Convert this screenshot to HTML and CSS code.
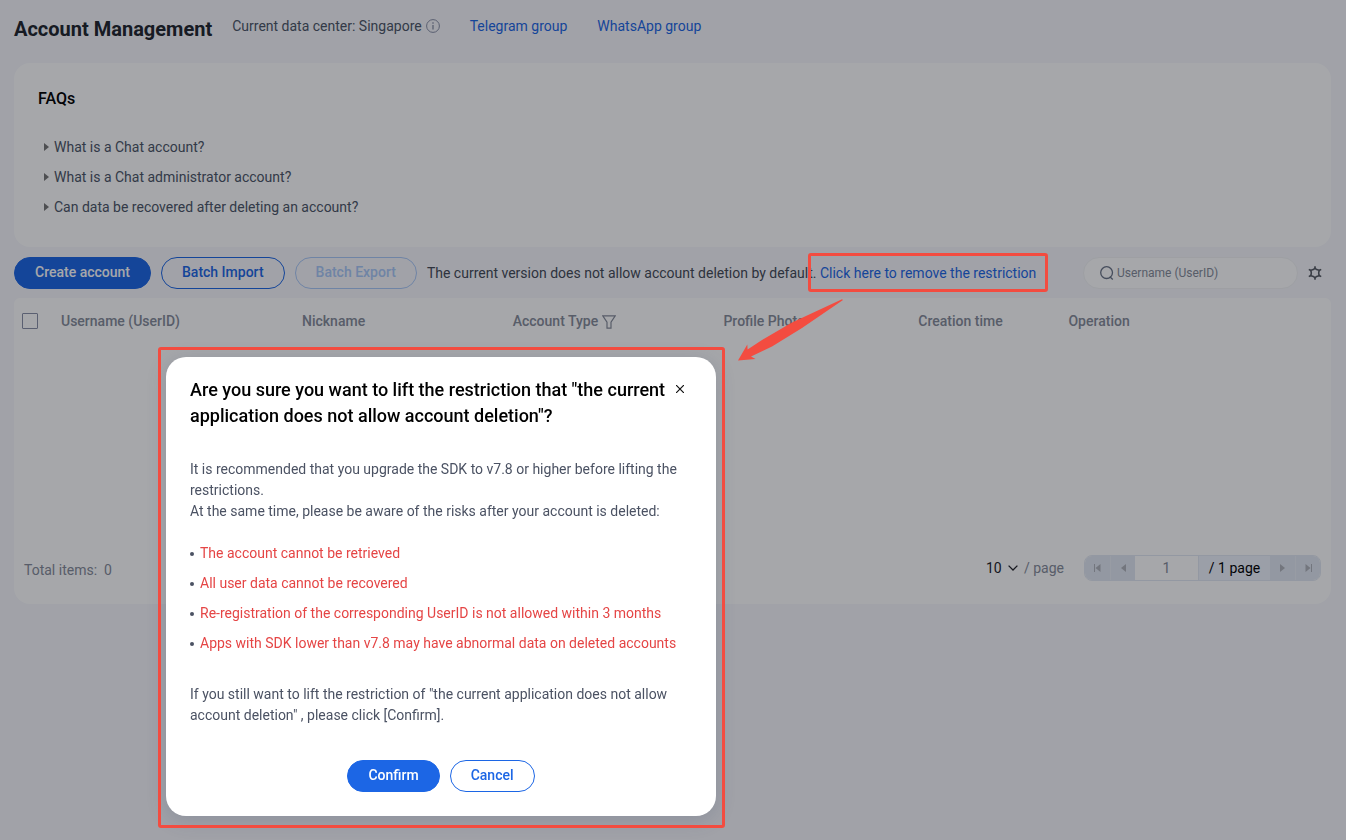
FILE: index.html
```html
<!DOCTYPE html>
<html lang="en">
<head>
    <meta charset="UTF-8">
    <meta name="viewport" content="width=device-width, initial-scale=1.0">
    <title>Account Management</title>
    <link rel="stylesheet" href="styles.css">
</head>
<body>

<div class="page">
    <header class="header">
        <h1 class="title">Account Management</h1>
        <span class="center">Current data center: Singapore
            <svg class="info" width="14" height="14" viewBox="0 0 14 14" fill="none" stroke="currentColor"><circle cx="7" cy="7" r="6.4"/><path d="M7 6v4.5M7 3.3v1.4" stroke-width="1.3"/></svg>
        </span>
        <a class="link" href="#">Telegram group</a>
        <a class="link" href="#">WhatsApp group</a>
    </header>

    <section class="faqs">
        <h2 class="faqs-title">FAQs</h2>
        <details class="faq"><summary>What is a Chat account?</summary></details>
        <details class="faq"><summary>What is a Chat administrator account?</summary></details>
        <details class="faq"><summary>Can data be recovered after deleting an account?</summary></details>
    </section>

    <div class="toolbar">
        <button class="button primary">Create account</button>
        <button class="button">Batch Import</button>
        <button class="button" disabled>Batch Export</button>
        <p class="notice">The current version does not allow account deletion by default. <a class="link" href="#">Click here to remove the restriction</a></p>
        <label class="search">
            <svg width="14" height="14" viewBox="0 0 14 14" fill="none" stroke="currentColor" stroke-width="1.3"><circle cx="6.6" cy="6.6" r="5.9"/><path d="M9.8 10.8l3 2.6"/></svg>
            <input type="text" placeholder="Username (UserID)" aria-label="Username (UserID)">
        </label>
        <button class="settings" aria-label="Settings">
            <svg width="14" height="14" viewBox="0 0 14 14" fill="none" stroke="currentColor" stroke-width="1.6"><path d="M7 .2v2.3M7 11.5v2.3M.8 3.4l2.4 1.4M10.8 9.2l2.4 1.4M.8 10.6l2.4-1.4M10.8 4.8l2.4-1.4"/><path d="M7 2.3l1.7 1.3 2.4.7-.4 2.7.4 2.7-2.4.7L7 11.7l-1.7-1.3-2.4-.7.4-2.7-.4-2.7 2.4-.7z"/></svg>
        </button>
    </div>

    <section class="accounts">
        <table class="table">
            <thead>
                <tr>
                    <th class="col-check"><input type="checkbox" class="check" aria-label="Select all"></th>
                    <th class="col-user">Username (UserID)</th>
                    <th class="col-mid">Nickname</th>
                    <th class="col-mid">Account Type
                        <svg class="filter" width="14" height="14" viewBox="0 0 14 14" fill="none" stroke="currentColor" stroke-width="1.2"><path d="M.8.8h12.4L9 7.2v6H5v-6z"/></svg>
                    </th>
                    <th class="col-photo">Profile Photo</th>
                    <th class="col-time">Creation time</th>
                    <th>Operation</th>
                </tr>
            </thead>
        </table>
        <footer class="footer">
            <span class="total">Total items:&nbsp; 0</span>
            <div class="paging">
                <label class="size">
                    <select class="size-select" aria-label="Items per page"><option>10</option></select>
                    <svg width="10" height="6" viewBox="0 0 10 6" fill="none" stroke="#212228" stroke-width="1.3"><path d="M.6.6L5 5 9.4.6"/></svg>
                    <span>/ page</span>
                </label>
                <nav class="pager">
                    <button class="step" aria-label="First page"><svg width="7" height="8" viewBox="0 0 7 8"><path d="M0 0h1v8H0zM6.5 0v8L1.5 4z"/></svg></button>
                    <button class="step" aria-label="Previous page"><svg width="5" height="8" viewBox="0 0 5 8"><path d="M5 0v8L0 4z"/></svg></button>
                    <input class="current" type="text" value="1" aria-label="Page">
                    <span class="pages">/ 1 page</span>
                    <button class="step" aria-label="Next page"><svg width="5" height="8" viewBox="0 0 5 8"><path d="M0 0v8l5-4z"/></svg></button>
                    <button class="step" aria-label="Last page"><svg width="7" height="8" viewBox="0 0 7 8"><path d="M6 0h1v8H6zM.5 0v8l5-4z"/></svg></button>
                </nav>
            </div>
        </footer>
    </section>
</div>

<div class="mask"></div>

<div class="dialog" role="dialog" aria-labelledby="dialog-title">
    <div class="dialog-head">
        <h2 class="dialog-title" id="dialog-title">Are you sure you want to lift the restriction that "the current application does not allow account deletion"?</h2>
        <button class="close" aria-label="Close">
            <svg width="8" height="8" viewBox="0 0 8 8" stroke="#111" stroke-width="1.2"><path d="M0 0l8 8M8 0L0 8"/></svg>
        </button>
    </div>
    <p>It is recommended that you upgrade the SDK to v7.8 or higher before lifting the restrictions.<br>At the same time, please be aware of the risks after your account is deleted:</p>
    <ul class="risks">
        <li>The account cannot be retrieved</li>
        <li>All user data cannot be recovered</li>
        <li>Re-registration of the corresponding UserID is not allowed within 3 months</li>
        <li>Apps with SDK lower than v7.8 may have abnormal data on deleted accounts</li>
    </ul>
    <p>If you still want to lift the restriction of "the current application does not allow account deletion" , please click [Confirm].</p>
    <div class="dialog-actions">
        <button class="button primary">Confirm</button>
        <button class="button">Cancel</button>
    </div>
    <div class="dialog-frame"></div>
</div>

<!-- callout on the link, with the arrow down to the dialog -->
<div class="link-frame"></div>
<svg class="arrow" width="106" height="63" viewBox="0 0 106 63"><path d="M0 62.5L9.300 46.600l.3 4.800L24 42l30-17.500L104 1.200l1 .8L64 30 34 48.500 13 58.500l4.500 2.500z" fill="#f34c40"/></svg>

</body>
</html>
```
FILE: styles.css
```css
* {
    box-sizing: border-box;
}
body {
    margin: 0;
    min-height: 100vh;
    background-color: #f7f8fc;
    font-family: Roboto, "Liberation Sans", sans-serif;
    font-size: 14px;
    line-height: 20px;
    color: #4b5566;
}
h1, h2, p, ul {
    margin: 0;
    padding: 0;
}
button, input, select {
    font: inherit;
    color: inherit;
    margin: 0;
}
svg {
    flex: none;
}
.page {
    padding: 16px 15px 16px 14px;
}
.header {
    display: flex;
    align-items: flex-start;
    height: 47px;
}
.title {
    margin-right: 20px;
    font-size: 20px;
    line-height: 26px;
    font-weight: 700;
    color: #20242c;
}
.center {
    display: flex;
    align-items: center;
    gap: 4px;
}
.info {
    color: #888fa6;
}
.link {
    color: #1c66e5;
    text-decoration: none;
}
.header .link {
    margin-left: 30px;
}
.faqs {
    padding: 24px 24px 25px;
    border-radius: 16px;
    background-color: #fff;
}
.faqs-title {
    margin-bottom: 21px;
    font-size: 16px;
    line-height: 24px;
    font-weight: 500;
    color: #000;
}
.faq summary {
    display: flex;
    align-items: center;
    gap: 5px;
    padding-left: 6px;
    height: 30px;
    list-style: none;
    cursor: pointer;
}
.faq summary::before {
    content: "";
    border: 4px solid transparent;
    border-left: 5px solid #767676;
    border-right: 0;
}
.toolbar {
    display: flex;
    align-items: center;
    margin-top: 10px;
    gap: 10px;
}
.button {
    height: 32px;
    padding: 0 20px 2px;
    border: 1px solid #1c66e5;
    border-radius: 16px;
    background-color: transparent;
    font-weight: 500;
    color: #1c66e5;
    white-space: nowrap;
    cursor: pointer;
}
.button.primary {
    background-color: #1c66e5;
    color: #fff;
}
.button:disabled {
    border-color: #aac8f8;
    color: #aac8f8;
    cursor: default;
}
.notice {
    flex: 1;
    color: #444a56;
}
.search {
    display: flex;
    align-items: center;
    gap: 3px;
    width: 215px;
    height: 32px;
    padding: 0 16px;
    border: 1px solid #f2f3f5;
    border-radius: 16px;
    background-color: #fff;
    color: #697386;
}
.search input {
    width: 100%;
    border: 0;
    padding: 0;
    background: none;
    font-size: 12px;
}
.search input::placeholder {
    color: #858b99;
}
.settings {
    display: flex;
    margin-right: 9px;
    padding: 0;
    border: 0;
    background: none;
    color: #575b63;
}
.accounts {
    display: flex;
    flex-direction: column;
    justify-content: space-between;
    min-height: 306px;
    margin-top: 9px;
    border-radius: 6px 6px 16px 16px;
    background-color: #fff;
}
.table {
    width: 100%;
    table-layout: fixed;
    border-collapse: collapse;
}
.table th {
    height: 46px;
    padding: 0 10px;
    text-align: left;
    font-weight: 500;
    color: #858b99;
    white-space: nowrap;
}
.table .col-check {
    width: 37px;
    padding: 0 0 0 8px;
}
.col-user {
    width: 18.3%;
}
.col-mid {
    width: 16%;
}
.col-photo {
    width: 14.8%;
}
.col-time {
    width: 11.4%;
}
.check {
    display: block;
    width: 16px;
    height: 16px;
    appearance: none;
    border: 1px solid #888fa6;
    border-radius: 1px;
}
.filter {
    vertical-align: -3px;
}
.footer {
    display: flex;
    justify-content: space-between;
    padding: 0 10px 23px;
    color: #858b99;
}
.total {
    padding-top: 5px;
}
.paging {
    display: flex;
    align-items: center;
    gap: 20px;
}
.size {
    display: flex;
    align-items: center;
    gap: 6px;
}
.size-select {
    width: 16px;
    padding: 0;
    appearance: none;
    border: 0;
    background: none;
    color: #212228;
}
.size span {
    line-height: 24px;
}
.pager {
    display: flex;
    height: 26px;
    border: 1px solid #e2e8f2;
    border-radius: 8px;
    overflow: hidden;
}
.step {
    display: flex;
    align-items: center;
    justify-content: center;
    width: 25px;
    padding: 0;
    border: 0;
    background-color: #e2e8f2;
    fill: #b0b3ba;
}
.step + .step {
    border-left: 1px solid #e9eef6;
}
.current {
    width: 63px;
    padding: 0;
    border: 0;
    background-color: #fff;
    text-align: center;
}
.pages {
    width: 72px;
    border-left: 1px solid #e2e8f2;
    background-color: #eef3fc;
    line-height: 24px;
    text-align: center;
    color: #000;
}
.mask {
    position: fixed;
    inset: 0;
    background-color: rgba(8, 11, 19, 0.36);
}
.dialog {
    position: absolute;
    top: 357px;
    left: 166px;
    width: 550px;
    padding: 20px 24px 24px;
    border-radius: 20px;
    background-color: #fff;
    box-shadow: 0 4px 20px rgba(54, 74, 112, 0.2);
    line-height: 21px;
    color: #4b5263;
}
.dialog-head {
    display: flex;
    align-items: flex-start;
    margin-bottom: 30px;
}
.dialog-title {
    flex: 1;
    font-size: 18px;
    line-height: 26px;
    font-weight: 500;
    color: #000;
}
.close {
    display: flex;
    padding: 8px;
    border: 0;
    background: none;
    cursor: pointer;
}
.risks {
    margin: 21px 0 30px;
    list-style: none;
    color: #e54545;
}
.risks li {
    display: flex;
    align-items: center;
    gap: 6px;
    margin-top: 9px;
}
.risks li::before {
    content: "";
    width: 4px;
    height: 4px;
    border-radius: 50%;
    background-color: #4b5263;
}
.dialog-actions {
    display: flex;
    justify-content: center;
    gap: 10px;
    margin-top: 34px;
}
.dialog-frame {
    position: absolute;
    inset: -10px -9px -12px -8px;
    border: 3px solid #f34c40;
    border-radius: 3px;
    pointer-events: none;
}
.link-frame {
    position: absolute;
    top: 253px;
    left: 808px;
    width: 240px;
    height: 39px;
    border: 3px solid #f34c40;
    border-radius: 3px;
    pointer-events: none;
}
.arrow {
    position: absolute;
    top: 298px;
    left: 738px;
    pointer-events: none;
}
```
